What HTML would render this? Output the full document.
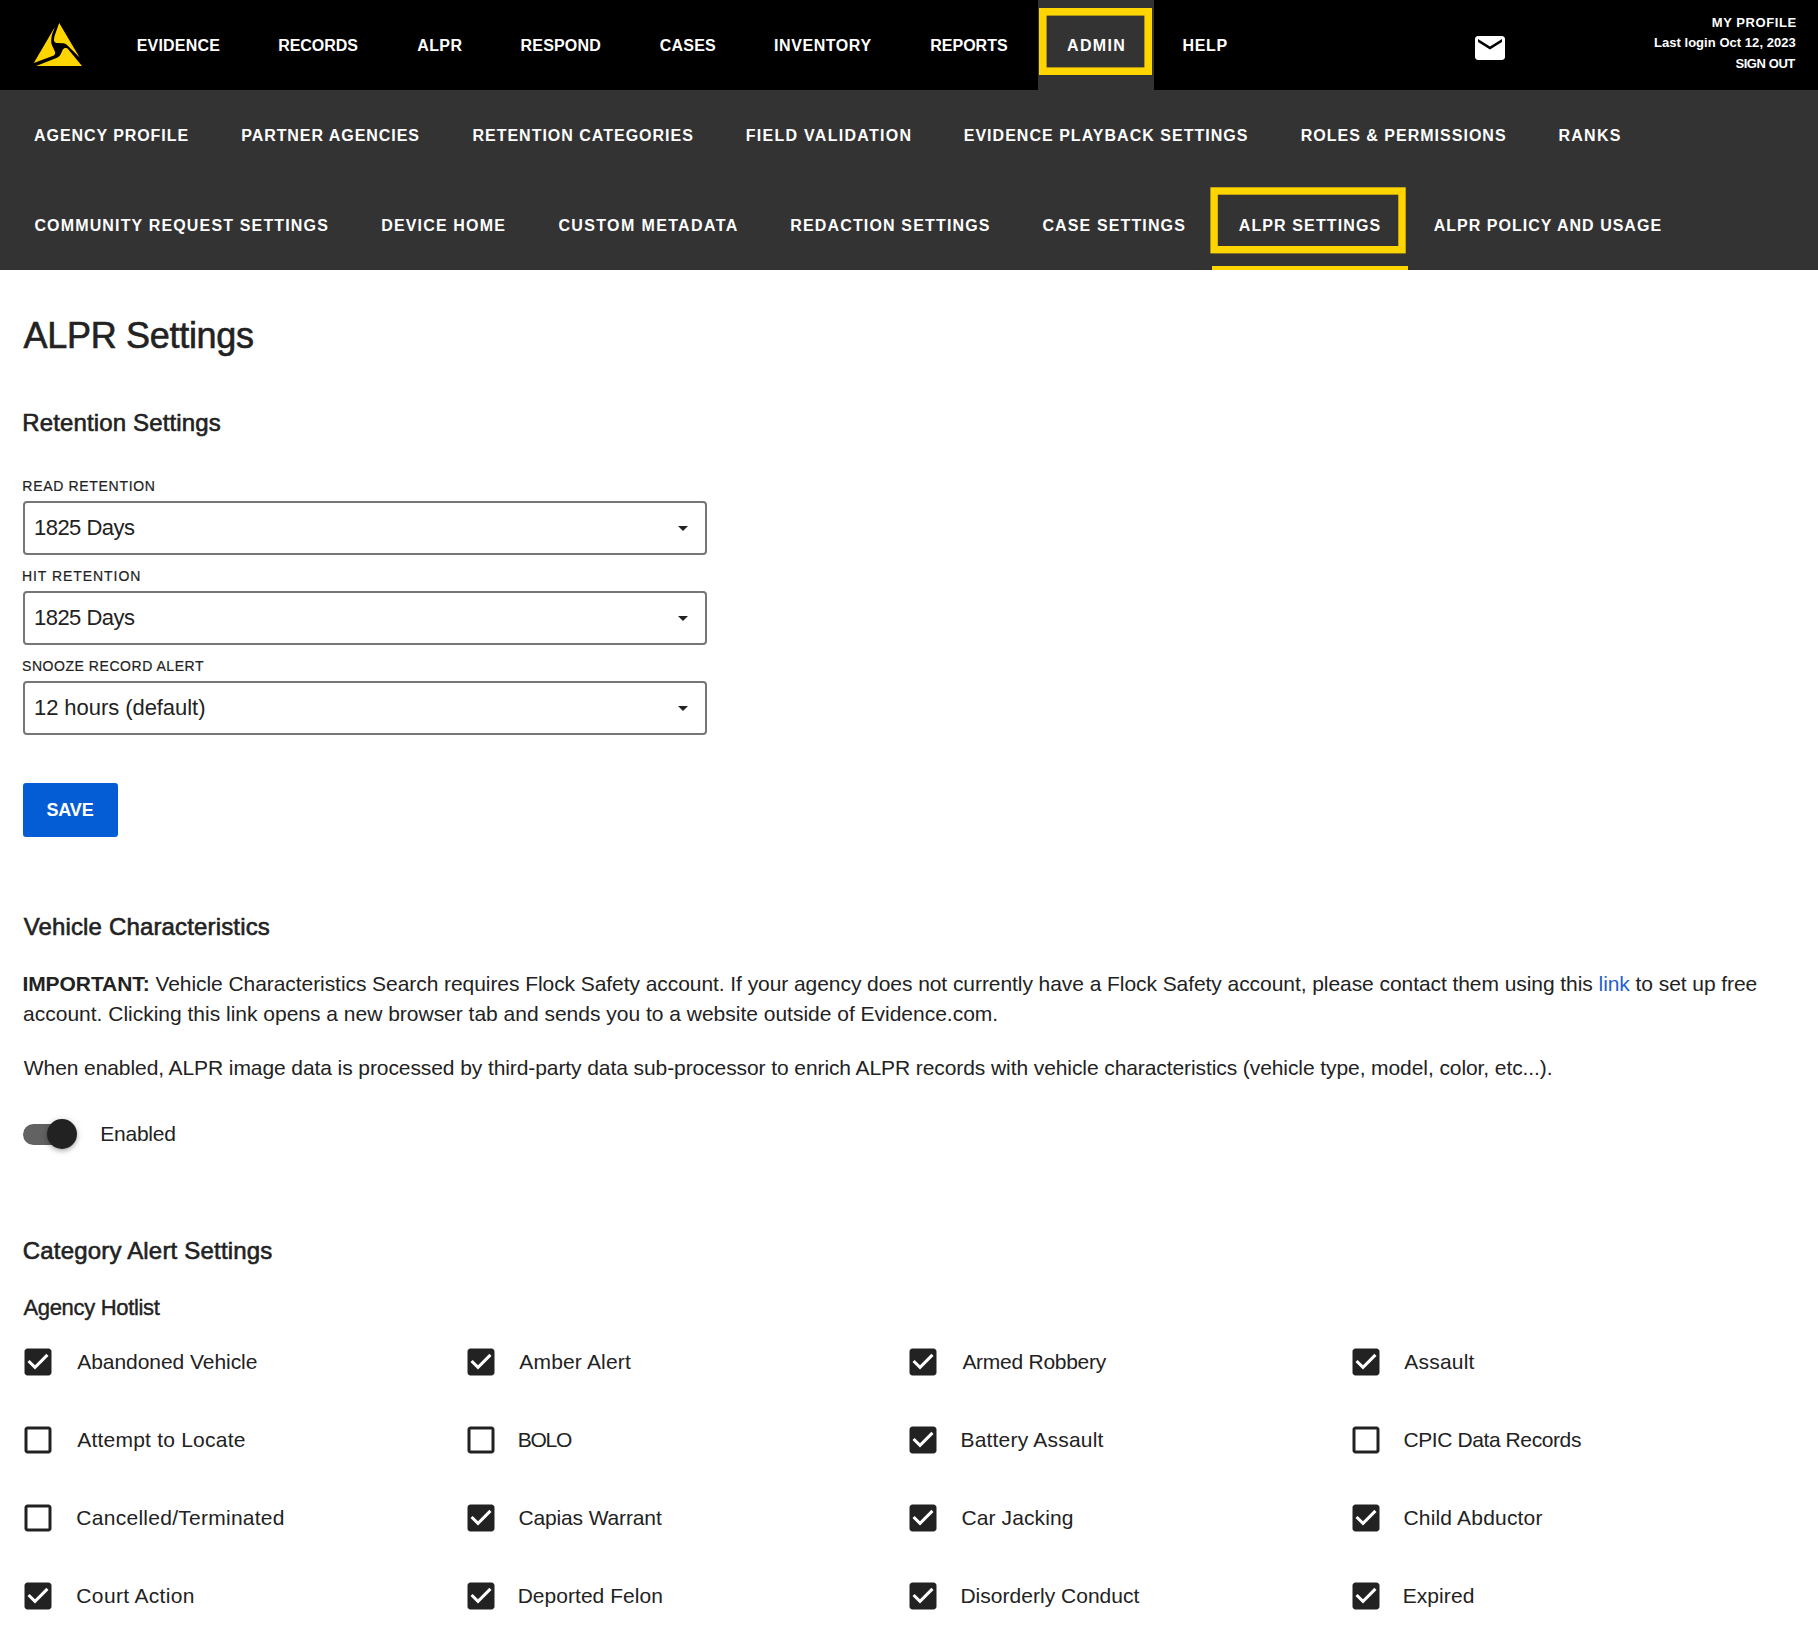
<!DOCTYPE html><html><head><meta charset="utf-8"><title>ALPR Settings</title><style>html,body{margin:0;padding:0}
body{width:1818px;height:1635px;overflow:hidden;position:relative;background:#fff;font-family:"Liberation Sans",sans-serif}
.t{position:absolute;white-space:nowrap;margin:0}
.lk{color:#1F5FD0}
</style></head><body>
<div style="position:absolute;left:0;top:0;width:1818px;height:90px;background:#000"></div>
<div style="position:absolute;left:1038px;top:0;width:116px;height:90px;background:#333"></div>
<div style="position:absolute;left:0;top:90px;width:1818px;height:180px;background:#333"></div>
<svg style="position:absolute;left:0;top:0" width="1818" height="270">
<rect x="1042.8" y="11.8" width="105.4" height="59.4" fill="none" stroke="#FFD500" stroke-width="7.6"/>
<rect x="1214.1000000000001" y="191.0" width="187.89999999999995" height="58.699999999999996" fill="none" stroke="#FFD500" stroke-width="7.4"/>
<rect x="1212" y="266" width="196" height="4" fill="#FFD500"/>
</svg>
<svg style="position:absolute;left:0;top:0" width="100" height="90" viewBox="0 0 100 90">
<path fill="#FFD500" d="M59.2,22.9 L79.6,57.5 L67.8,45.7 C66.5,44.3 65,43.5 63.2,43.3 L57,42.9 C55,42.8 54,41.8 54,40 C54,38.5 54.2,37 54.7,35.6 Z"/>
<path fill="#FFD500" d="M54.9,27 L33.8,63 L52.6,56.1 C54.6,55.3 55.4,54 55.1,52.2 C54.6,49.8 51.9,46.6 51.3,43 C51,40 51.6,36 52.4,33.6 Z"/>
<path fill="#FFD500" d="M36.1,65.9 L82,65.9 L68.4,49.5 C67.4,48.3 65.6,47.8 64.3,48.3 C63,49 62.3,50.5 61.5,52.5 C60.5,55 59.3,56.6 56.5,58 Z"/>
</svg>
<svg style="position:absolute;left:1471.7px;top:29.6px" width="36" height="36" viewBox="0 0 24 24"><path fill="#fff" d="M20 4H4c-1.1 0-1.99.9-1.99 2L2 18c0 1.1.9 2 2 2h16c1.1 0 2-.9 2-2V6c0-1.1-.9-2-2-2zm0 4l-8 5-8-5V6l8 5 8-5v2z"/></svg>
<div style="position:absolute;left:23px;top:501px;width:680px;height:50px;border:2px solid #767676;border-radius:4px;background:#fff"></div>
<svg style="position:absolute;left:678px;top:526px" width="10" height="5" viewBox="0 0 10 5"><path d="M0 0H10L5 5Z" fill="#222"/></svg>
<div style="position:absolute;left:23px;top:591px;width:680px;height:50px;border:2px solid #767676;border-radius:4px;background:#fff"></div>
<svg style="position:absolute;left:678px;top:616px" width="10" height="5" viewBox="0 0 10 5"><path d="M0 0H10L5 5Z" fill="#222"/></svg>
<div style="position:absolute;left:23px;top:681px;width:680px;height:50px;border:2px solid #767676;border-radius:4px;background:#fff"></div>
<svg style="position:absolute;left:678px;top:706px" width="10" height="5" viewBox="0 0 10 5"><path d="M0 0H10L5 5Z" fill="#222"/></svg>
<div style="position:absolute;left:23px;top:783px;width:95px;height:54px;background:#055DD5;border-radius:3px"></div>
<div style="position:absolute;left:23px;top:1124px;width:51px;height:21px;border-radius:10.5px;background:#626262"></div>
<div style="position:absolute;left:47px;top:1119px;width:30px;height:30px;border-radius:15px;background:#222;box-shadow:0 2px 4px rgba(0,0,0,.25),0 1px 8px rgba(0,0,0,.12)"></div>
<svg style="position:absolute;left:20.00px;top:1343.90px" width="36" height="36" viewBox="0 0 24 24"><path fill="#222" d="M19 3H5c-1.11 0-2 .9-2 2v14c0 1.1.89 2 2 2h14c1.11 0 2-.9 2-2V5c0-1.1-.89-2-2-2zm-9 14l-5-5 1.41-1.41L10 14.17l7.59-7.59L19 8l-9 9z"/></svg>
<svg style="position:absolute;left:20.00px;top:1421.90px" width="36" height="36" viewBox="0 0 24 24"><path fill="#222" d="M19 5v14H5V5h14m0-2H5c-1.1 0-2 .9-2 2v14c0 1.1.9 2 2 2h14c1.1 0 2-.9 2-2V5c0-1.1-.9-2-2-2z"/></svg>
<svg style="position:absolute;left:20.00px;top:1499.90px" width="36" height="36" viewBox="0 0 24 24"><path fill="#222" d="M19 5v14H5V5h14m0-2H5c-1.1 0-2 .9-2 2v14c0 1.1.9 2 2 2h14c1.1 0 2-.9 2-2V5c0-1.1-.9-2-2-2z"/></svg>
<svg style="position:absolute;left:20.00px;top:1577.90px" width="36" height="36" viewBox="0 0 24 24"><path fill="#222" d="M19 3H5c-1.11 0-2 .9-2 2v14c0 1.1.89 2 2 2h14c1.11 0 2-.9 2-2V5c0-1.1-.89-2-2-2zm-9 14l-5-5 1.41-1.41L10 14.17l7.59-7.59L19 8l-9 9z"/></svg>
<svg style="position:absolute;left:463.00px;top:1343.90px" width="36" height="36" viewBox="0 0 24 24"><path fill="#222" d="M19 3H5c-1.11 0-2 .9-2 2v14c0 1.1.89 2 2 2h14c1.11 0 2-.9 2-2V5c0-1.1-.89-2-2-2zm-9 14l-5-5 1.41-1.41L10 14.17l7.59-7.59L19 8l-9 9z"/></svg>
<svg style="position:absolute;left:463.00px;top:1421.90px" width="36" height="36" viewBox="0 0 24 24"><path fill="#222" d="M19 5v14H5V5h14m0-2H5c-1.1 0-2 .9-2 2v14c0 1.1.9 2 2 2h14c1.1 0 2-.9 2-2V5c0-1.1-.9-2-2-2z"/></svg>
<svg style="position:absolute;left:463.00px;top:1499.90px" width="36" height="36" viewBox="0 0 24 24"><path fill="#222" d="M19 3H5c-1.11 0-2 .9-2 2v14c0 1.1.89 2 2 2h14c1.11 0 2-.9 2-2V5c0-1.1-.89-2-2-2zm-9 14l-5-5 1.41-1.41L10 14.17l7.59-7.59L19 8l-9 9z"/></svg>
<svg style="position:absolute;left:463.00px;top:1577.90px" width="36" height="36" viewBox="0 0 24 24"><path fill="#222" d="M19 3H5c-1.11 0-2 .9-2 2v14c0 1.1.89 2 2 2h14c1.11 0 2-.9 2-2V5c0-1.1-.89-2-2-2zm-9 14l-5-5 1.41-1.41L10 14.17l7.59-7.59L19 8l-9 9z"/></svg>
<svg style="position:absolute;left:904.90px;top:1343.90px" width="36" height="36" viewBox="0 0 24 24"><path fill="#222" d="M19 3H5c-1.11 0-2 .9-2 2v14c0 1.1.89 2 2 2h14c1.11 0 2-.9 2-2V5c0-1.1-.89-2-2-2zm-9 14l-5-5 1.41-1.41L10 14.17l7.59-7.59L19 8l-9 9z"/></svg>
<svg style="position:absolute;left:904.90px;top:1421.90px" width="36" height="36" viewBox="0 0 24 24"><path fill="#222" d="M19 3H5c-1.11 0-2 .9-2 2v14c0 1.1.89 2 2 2h14c1.11 0 2-.9 2-2V5c0-1.1-.89-2-2-2zm-9 14l-5-5 1.41-1.41L10 14.17l7.59-7.59L19 8l-9 9z"/></svg>
<svg style="position:absolute;left:904.90px;top:1499.90px" width="36" height="36" viewBox="0 0 24 24"><path fill="#222" d="M19 3H5c-1.11 0-2 .9-2 2v14c0 1.1.89 2 2 2h14c1.11 0 2-.9 2-2V5c0-1.1-.89-2-2-2zm-9 14l-5-5 1.41-1.41L10 14.17l7.59-7.59L19 8l-9 9z"/></svg>
<svg style="position:absolute;left:904.90px;top:1577.90px" width="36" height="36" viewBox="0 0 24 24"><path fill="#222" d="M19 3H5c-1.11 0-2 .9-2 2v14c0 1.1.89 2 2 2h14c1.11 0 2-.9 2-2V5c0-1.1-.89-2-2-2zm-9 14l-5-5 1.41-1.41L10 14.17l7.59-7.59L19 8l-9 9z"/></svg>
<svg style="position:absolute;left:1348.10px;top:1343.90px" width="36" height="36" viewBox="0 0 24 24"><path fill="#222" d="M19 3H5c-1.11 0-2 .9-2 2v14c0 1.1.89 2 2 2h14c1.11 0 2-.9 2-2V5c0-1.1-.89-2-2-2zm-9 14l-5-5 1.41-1.41L10 14.17l7.59-7.59L19 8l-9 9z"/></svg>
<svg style="position:absolute;left:1348.10px;top:1421.90px" width="36" height="36" viewBox="0 0 24 24"><path fill="#222" d="M19 5v14H5V5h14m0-2H5c-1.1 0-2 .9-2 2v14c0 1.1.9 2 2 2h14c1.1 0 2-.9 2-2V5c0-1.1-.9-2-2-2z"/></svg>
<svg style="position:absolute;left:1348.10px;top:1499.90px" width="36" height="36" viewBox="0 0 24 24"><path fill="#222" d="M19 3H5c-1.11 0-2 .9-2 2v14c0 1.1.89 2 2 2h14c1.11 0 2-.9 2-2V5c0-1.1-.89-2-2-2zm-9 14l-5-5 1.41-1.41L10 14.17l7.59-7.59L19 8l-9 9z"/></svg>
<svg style="position:absolute;left:1348.10px;top:1577.90px" width="36" height="36" viewBox="0 0 24 24"><path fill="#222" d="M19 3H5c-1.11 0-2 .9-2 2v14c0 1.1.89 2 2 2h14c1.11 0 2-.9 2-2V5c0-1.1-.89-2-2-2zm-9 14l-5-5 1.41-1.41L10 14.17l7.59-7.59L19 8l-9 9z"/></svg>
<div class="t" id="tn0" style="left:136.67px;top:38px;font-size:16px;line-height:16px;font-weight:700;color:#fff;letter-spacing:0.193px">EVIDENCE</div>
<div class="t" id="tn1" style="left:278.22px;top:38px;font-size:16px;line-height:16px;font-weight:700;color:#fff;letter-spacing:-0.061px">RECORDS</div>
<div class="t" id="tn2" style="left:417.28px;top:38px;font-size:16px;line-height:16px;font-weight:700;color:#fff;letter-spacing:0.375px">ALPR</div>
<div class="t" id="tn3" style="left:520.62px;top:38px;font-size:16px;line-height:16px;font-weight:700;color:#fff;letter-spacing:0.165px">RESPOND</div>
<div class="t" id="tn4" style="left:659.85px;top:38px;font-size:16px;line-height:16px;font-weight:700;color:#fff;letter-spacing:0.194px">CASES</div>
<div class="t" id="tn5" style="left:774.10px;top:38px;font-size:16px;line-height:16px;font-weight:700;color:#fff;letter-spacing:0.564px">INVENTORY</div>
<div class="t" id="tn6" style="left:930.22px;top:38px;font-size:16px;line-height:16px;font-weight:700;color:#fff;letter-spacing:0.005px">REPORTS</div>
<div class="t" id="tn7" style="left:1067.09px;top:38px;font-size:16px;line-height:16px;font-weight:700;color:#fff;letter-spacing:1.334px">ADMIN</div>
<div class="t" id="tn8" style="left:1182.62px;top:38px;font-size:16px;line-height:16px;font-weight:700;color:#fff;letter-spacing:0.637px">HELP</div>
<div class="t" id="pf0" style="left:1711.78px;top:16px;font-size:13px;line-height:13px;font-weight:700;color:#fff;letter-spacing:0.577px">MY PROFILE</div>
<div class="t" id="pf1" style="left:1653.95px;top:36px;font-size:13px;line-height:13px;font-weight:700;color:#fff;letter-spacing:0.041px">Last login Oct 12, 2023</div>
<div class="t" id="pf2" style="left:1735.38px;top:57px;font-size:13px;line-height:13px;font-weight:700;color:#fff;letter-spacing:-0.414px">SIGN OUT</div>
<div class="t" id="sa0" style="left:34.04px;top:128px;font-size:16px;line-height:16px;font-weight:700;color:#fff;letter-spacing:0.931px">AGENCY PROFILE</div>
<div class="t" id="sa1" style="left:241.21px;top:128px;font-size:16px;line-height:16px;font-weight:700;color:#fff;letter-spacing:0.947px">PARTNER AGENCIES</div>
<div class="t" id="sa2" style="left:472.47px;top:128px;font-size:16px;line-height:16px;font-weight:700;color:#fff;letter-spacing:0.994px">RETENTION CATEGORIES</div>
<div class="t" id="sa3" style="left:745.70px;top:128px;font-size:16px;line-height:16px;font-weight:700;color:#fff;letter-spacing:1.285px">FIELD VALIDATION</div>
<div class="t" id="sa4" style="left:963.70px;top:128px;font-size:16px;line-height:16px;font-weight:700;color:#fff;letter-spacing:1.026px">EVIDENCE PLAYBACK SETTINGS</div>
<div class="t" id="sa5" style="left:1300.70px;top:128px;font-size:16px;line-height:16px;font-weight:700;color:#fff;letter-spacing:1.011px">ROLES &amp; PERMISSIONS</div>
<div class="t" id="sa6" style="left:1558.47px;top:128px;font-size:16px;line-height:16px;font-weight:700;color:#fff;letter-spacing:1.257px">RANKS</div>
<div class="t" id="sb0" style="left:34.40px;top:218px;font-size:16px;line-height:16px;font-weight:700;color:#fff;letter-spacing:1.152px">COMMUNITY REQUEST SETTINGS</div>
<div class="t" id="sb1" style="left:381.22px;top:218px;font-size:16px;line-height:16px;font-weight:700;color:#fff;letter-spacing:1.162px">DEVICE HOME</div>
<div class="t" id="sb2" style="left:558.40px;top:218px;font-size:16px;line-height:16px;font-weight:700;color:#fff;letter-spacing:1.366px">CUSTOM METADATA</div>
<div class="t" id="sb3" style="left:790.21px;top:218px;font-size:16px;line-height:16px;font-weight:700;color:#fff;letter-spacing:1.160px">REDACTION SETTINGS</div>
<div class="t" id="sb4" style="left:1042.40px;top:218px;font-size:16px;line-height:16px;font-weight:700;color:#fff;letter-spacing:1.129px">CASE SETTINGS</div>
<div class="t" id="sb5" style="left:1238.71px;top:218px;font-size:16px;line-height:16px;font-weight:700;color:#fff;letter-spacing:1.119px">ALPR SETTINGS</div>
<div class="t" id="sb6" style="left:1433.78px;top:218px;font-size:16px;line-height:16px;font-weight:700;color:#fff;letter-spacing:1.008px">ALPR POLICY AND USAGE</div>
<div class="t" id="h1" style="left:23.60px;top:318px;font-size:36px;line-height:36px;font-weight:400;color:#222;letter-spacing:-0.309px;-webkit-text-stroke:0.6px #222">ALPR Settings</div>
<div class="t" id="h2a" style="left:22.33px;top:411px;font-size:24px;line-height:24px;font-weight:400;color:#222;letter-spacing:0.133px;-webkit-text-stroke:0.6px #222">Retention Settings</div>
<div class="t" id="lb0" style="left:22.37px;top:479px;font-size:14px;line-height:14px;font-weight:400;color:#222;letter-spacing:0.682px;-webkit-text-stroke:0.2px #222">READ RETENTION</div>
<div class="t" id="lb1" style="left:21.95px;top:569px;font-size:14px;line-height:14px;font-weight:400;color:#222;letter-spacing:0.946px;-webkit-text-stroke:0.2px #222">HIT RETENTION</div>
<div class="t" id="lb2" style="left:22.01px;top:659px;font-size:14px;line-height:14px;font-weight:400;color:#222;letter-spacing:0.549px;-webkit-text-stroke:0.2px #222">SNOOZE RECORD ALERT</div>
<div class="t" id="sv0" style="left:33.96px;top:517px;font-size:22px;line-height:22px;font-weight:400;color:#222;letter-spacing:-0.512px">1825 Days</div>
<div class="t" id="sv1" style="left:33.96px;top:607px;font-size:22px;line-height:22px;font-weight:400;color:#222;letter-spacing:-0.512px">1825 Days</div>
<div class="t" id="sv2" style="left:33.96px;top:697px;font-size:22px;line-height:22px;font-weight:400;color:#222;letter-spacing:-0.055px">12 hours (default)</div>
<div class="t" id="save" style="left:46.38px;top:801px;font-size:18px;line-height:18px;font-weight:700;color:#fff;letter-spacing:-0.108px">SAVE</div>
<div class="t" id="h2b" style="left:23.65px;top:915px;font-size:24px;line-height:24px;font-weight:400;color:#222;letter-spacing:0.154px;-webkit-text-stroke:0.6px #222">Vehicle Characteristics</div>
<div class="t" id="p1" style="left:22.39px;top:973px;font-size:21px;line-height:21px;font-weight:400;color:#222;letter-spacing:-0.065px"><b>IMPORTANT:</b> Vehicle Characteristics Search requires Flock Safety account. If your agency does not currently have a Flock Safety account, please contact them using this <span class="lk">link</span> to set up free</div>
<div class="t" id="p2" style="left:23.11px;top:1003px;font-size:21px;line-height:21px;font-weight:400;color:#222;letter-spacing:-0.008px">account. Clicking this link opens a new browser tab and sends you to a website outside of Evidence.com.</div>
<div class="t" id="p3" style="left:23.84px;top:1057px;font-size:21px;line-height:21px;font-weight:400;color:#222;letter-spacing:-0.087px">When enabled, ALPR image data is processed by third-party data sub-processor to enrich ALPR records with vehicle characteristics (vehicle type, model, color, etc...).</div>
<div class="t" id="en" style="left:100.36px;top:1123px;font-size:21px;line-height:21px;font-weight:400;color:#222;letter-spacing:-0.263px">Enabled</div>
<div class="t" id="h2c" style="left:22.73px;top:1239px;font-size:24px;line-height:24px;font-weight:400;color:#222;letter-spacing:0.189px;-webkit-text-stroke:0.6px #222">Category Alert Settings</div>
<div class="t" id="ah" style="left:23.45px;top:1297px;font-size:22px;line-height:22px;font-weight:400;color:#222;letter-spacing:-0.322px;-webkit-text-stroke:0.4px #222">Agency Hotlist</div>
<div class="t" id="cb00" style="left:77.21px;top:1351px;font-size:21px;line-height:21px;font-weight:400;color:#222;letter-spacing:-0.051px">Abandoned Vehicle</div>
<div class="t" id="cb01" style="left:77.21px;top:1429px;font-size:21px;line-height:21px;font-weight:400;color:#222;letter-spacing:0.224px">Attempt to Locate</div>
<div class="t" id="cb02" style="left:76.37px;top:1507px;font-size:21px;line-height:21px;font-weight:400;color:#222;letter-spacing:0.264px">Cancelled/Terminated</div>
<div class="t" id="cb03" style="left:76.37px;top:1585px;font-size:21px;line-height:21px;font-weight:400;color:#222;letter-spacing:0.340px">Court Action</div>
<div class="t" id="cb10" style="left:519.25px;top:1351px;font-size:21px;line-height:21px;font-weight:400;color:#222;letter-spacing:0.190px">Amber Alert</div>
<div class="t" id="cb11" style="left:517.65px;top:1429px;font-size:21px;line-height:21px;font-weight:400;color:#222;letter-spacing:-1.208px">BOLO</div>
<div class="t" id="cb12" style="left:518.42px;top:1507px;font-size:21px;line-height:21px;font-weight:400;color:#222;letter-spacing:-0.137px">Capias Warrant</div>
<div class="t" id="cb13" style="left:517.65px;top:1585px;font-size:21px;line-height:21px;font-weight:400;color:#222;letter-spacing:0.037px">Deported Felon</div>
<div class="t" id="cb20" style="left:962.38px;top:1351px;font-size:21px;line-height:21px;font-weight:400;color:#222;letter-spacing:-0.264px">Armed Robbery</div>
<div class="t" id="cb21" style="left:960.45px;top:1429px;font-size:21px;line-height:21px;font-weight:400;color:#222;letter-spacing:0.207px">Battery Assault</div>
<div class="t" id="cb22" style="left:961.52px;top:1507px;font-size:21px;line-height:21px;font-weight:400;color:#222;letter-spacing:0.107px">Car Jacking</div>
<div class="t" id="cb23" style="left:960.45px;top:1585px;font-size:21px;line-height:21px;font-weight:400;color:#222;letter-spacing:0.019px">Disorderly Conduct</div>
<div class="t" id="cb30" style="left:1404.25px;top:1351px;font-size:21px;line-height:21px;font-weight:400;color:#222;letter-spacing:0.217px">Assault</div>
<div class="t" id="cb31" style="left:1403.42px;top:1429px;font-size:21px;line-height:21px;font-weight:400;color:#222;letter-spacing:-0.400px">CPIC Data Records</div>
<div class="t" id="cb32" style="left:1403.42px;top:1507px;font-size:21px;line-height:21px;font-weight:400;color:#222;letter-spacing:0.190px">Child Abductor</div>
<div class="t" id="cb33" style="left:1402.65px;top:1585px;font-size:21px;line-height:21px;font-weight:400;color:#222;letter-spacing:0.081px">Expired</div>
</body></html>
